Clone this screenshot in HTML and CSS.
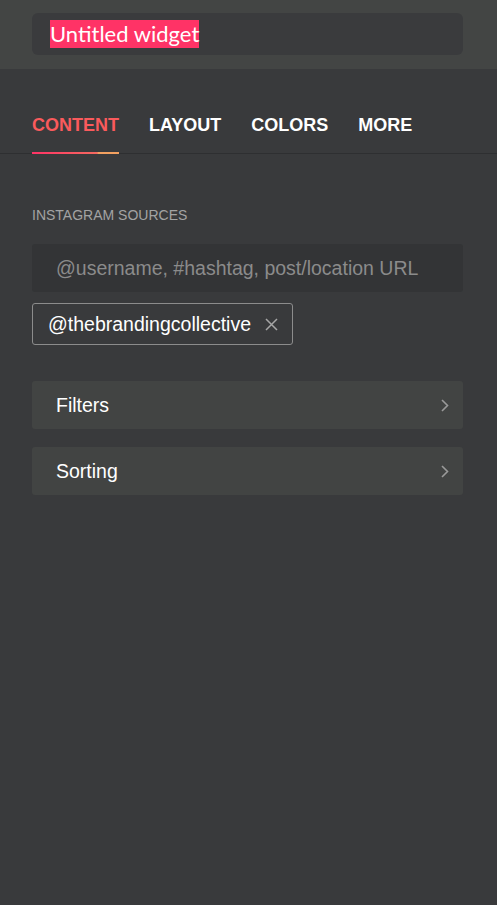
FILE: index.html
```html
<!DOCTYPE html>
<html lang="en">
<head>
<meta charset="utf-8">
<title>Untitled widget</title>
<link rel="stylesheet" href="styles.css">
</head>
<body>
<header class="top">
  <div class="title-box"><span class="title-sel">Untitled widget</span></div>
</header>
<nav class="tabs">
  <a class="tab active">CONTENT</a>
  <a class="tab">LAYOUT</a>
  <a class="tab">COLORS</a>
  <a class="tab">MORE</a>
</nav>
<main class="content">
  <div class="label">INSTAGRAM SOURCES</div>
  <div class="source-input">@username, #hashtag, post/location URL</div>
  <div class="chips">
    <div class="chip">
      <span class="chip-text">@thebrandingcollective</span>
      <svg class="chip-x" width="13" height="13" viewBox="0 0 13 13"><path d="M1 1L12 12M12 1L1 12" stroke="#a6a6a6" stroke-width="1.5" fill="none"/></svg>
    </div>
  </div>
  <div class="rows">
    <div class="row"><span>Filters</span><svg class="chev" width="8" height="13" viewBox="0 0 8 13"><path d="M1 1L6.5 6.5L1 12" stroke="#9a9a9a" stroke-width="1.6" fill="none"/></svg></div>
    <div class="row"><span>Sorting</span><svg class="chev" width="8" height="13" viewBox="0 0 8 13"><path d="M1 1L6.5 6.5L1 12" stroke="#9a9a9a" stroke-width="1.6" fill="none"/></svg></div>
  </div>
</main>
</body>
</html>
```

FILE: styles.css
```css
html, body {
  margin: 0;
  padding: 0;
  background: #393a3c;
  font-family: "Liberation Sans", Arial, sans-serif;
  color: #ffffff;
}
body {
  min-height: 905px;
}
.top {
  background: #434544;
  padding: 13px 34px 14px 32px;
}
.title-box {
  height: 42px;
  background: #3a3b3d;
  border-radius: 6px;
  padding-left: 18px;
  display: flex;
  align-items: center;
}
.title-sel {
  font-family: "Lato", "Noto Sans", sans-serif;
  font-size: 22px;
  line-height: 28px;
  background: #ff3366;
  color: #ffffff;
}
.tabs {
  display: flex;
  gap: 30px;
  padding: 0 32px;
  border-bottom: 1px solid #2e2f31;
}
.tab {
  position: relative;
  font-size: 18px;
  font-weight: bold;
  line-height: 20px;
  padding: 46px 0 18px;
  color: #ffffff;
}
.tab.active {
  color: #fa5a5c;
}
.tab.active::after {
  content: "";
  position: absolute;
  left: 0;
  right: 0;
  bottom: -1px;
  height: 2px;
  background: linear-gradient(90deg, #ff3366 0%, #fb4f62 40%, #f46a60 75%, #f2a060 76%, #f2a060 100%);
}
.content {
  padding: 53px 34px 0 32px;
}
.label {
  font-size: 14px;
  line-height: 16px;
  color: #a3a3a3;
}
.source-input {
  margin-top: 21px;
  height: 48px;
  background: #333436;
  border-radius: 3px;
  padding-left: 24px;
  display: flex;
  align-items: center;
  font-size: 19.5px;
  color: #8b8b8b;
}
.chips {
  display: flex;
  margin-top: 11px;
}
.chip {
  height: 40px;
  border: 1px solid #8c8c8c;
  border-radius: 3px;
  padding: 0 14px 0 15px;
  display: flex;
  align-items: center;
  gap: 14px;
  font-size: 19.5px;
}
.chip-x {
  display: block;
}
.rows {
  margin-top: 36px;
  display: flex;
  flex-direction: column;
  gap: 18px;
}
.row {
  height: 48px;
  background: #424443;
  border-radius: 3px;
  padding: 0 14px 0 24px;
  display: flex;
  align-items: center;
  justify-content: space-between;
  font-size: 19.5px;
}
.chev {
  display: block;
}
```
